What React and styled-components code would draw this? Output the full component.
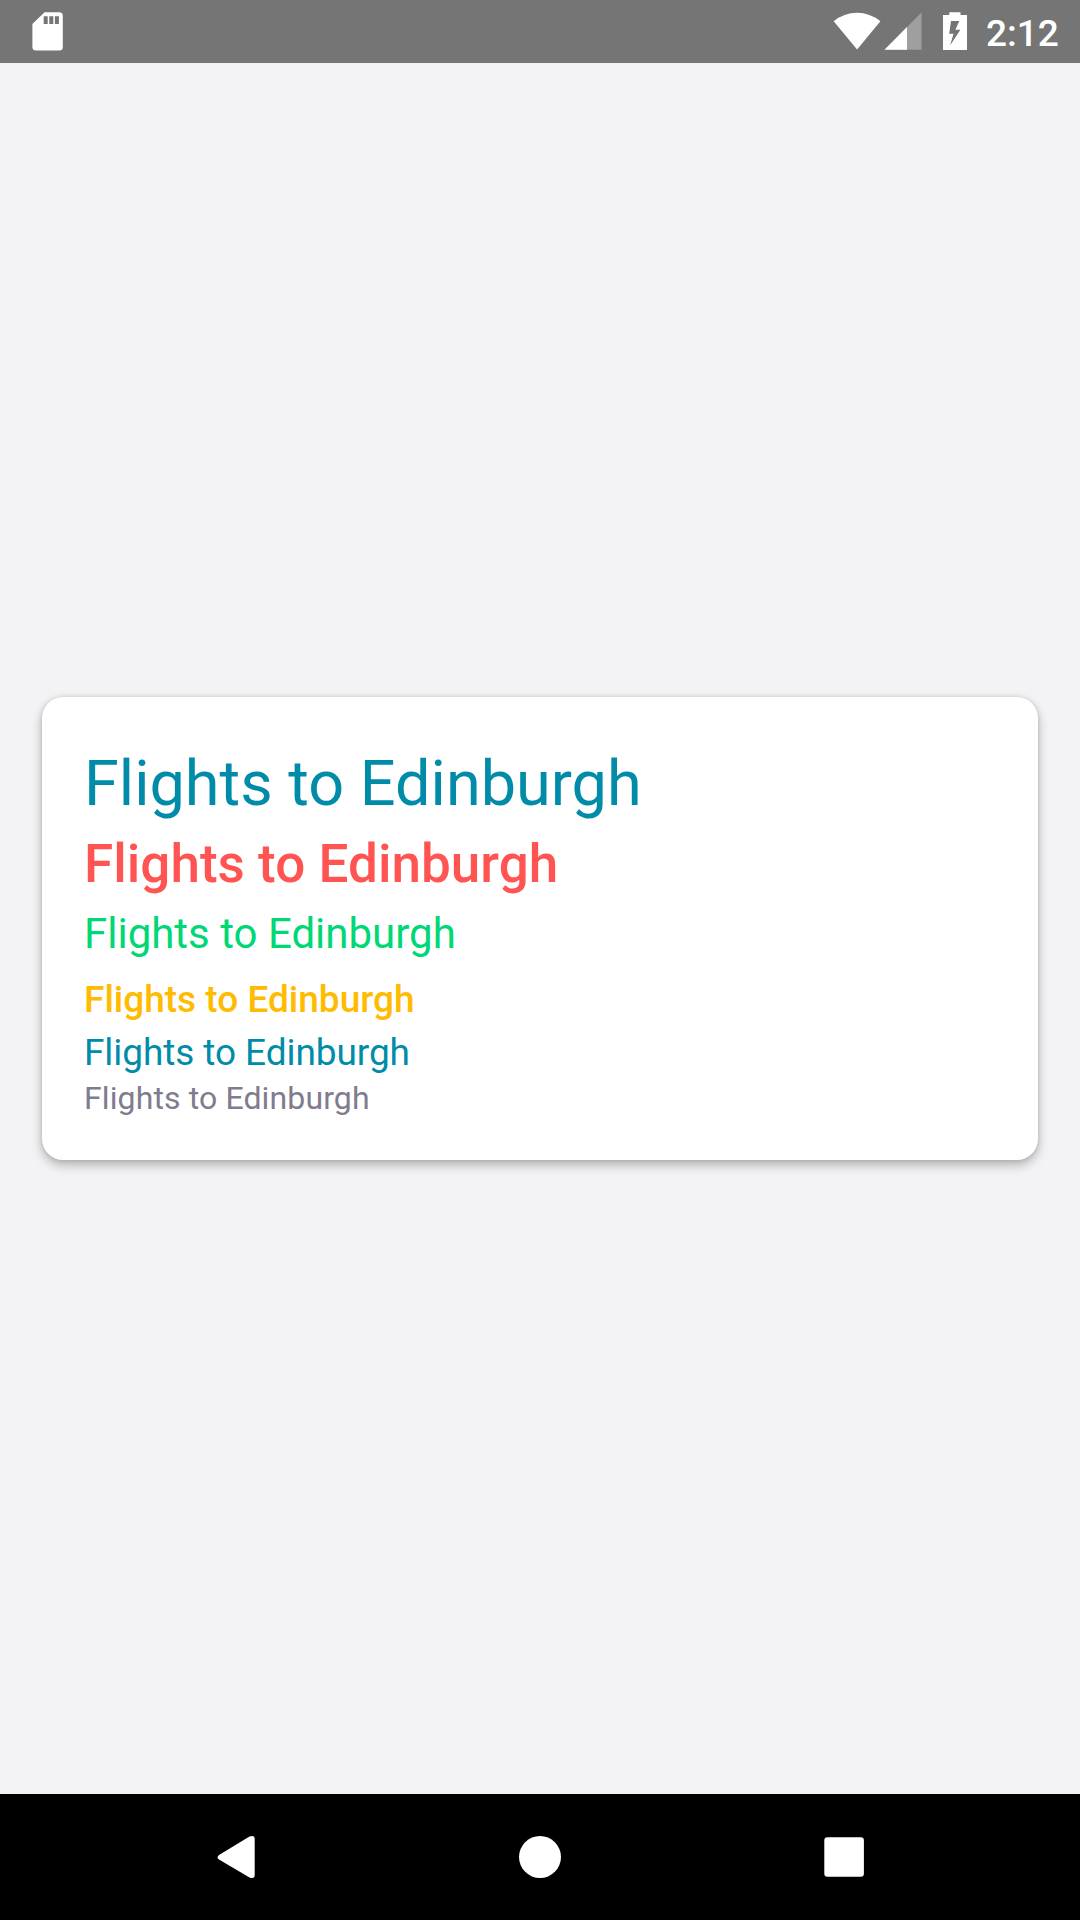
import React from "react";
import styled, { createGlobalStyle } from "styled-components";

const GlobalStyle = createGlobalStyle`
  html, body { margin: 0; padding: 0; }
  body { font-family: Roboto, "Noto Sans", sans-serif; }
`;

const Screen = styled.div`
  display: flex;
  flex-direction: column;
  width: 1080px;
  height: 1920px;
  overflow: hidden;
  background: #f3f3f5;
`;

const StatusBar = styled.header`
  display: flex;
  flex: none;
  justify-content: space-between;
  height: 63px;
  padding: 0 20px 0 32px;
  box-sizing: border-box;
  background: #757575;
`;

const StatusGroup = styled.div`
  display: flex;
`;

const StatusIcon = styled.svg`
  display: block;
  flex: none;
  height: 63px;
  width: ${(p) => p.$width}px;
  margin-right: ${(p) => p.$gap || 0}px;
`;

const Clock = styled.time`
  width: 74px;
  color: #fff;
  font-size: 37px;
  font-weight: 500;
  line-height: 67px;
  white-space: nowrap;
`;

const Content = styled.main`
  display: flex;
  flex: 1;
  flex-direction: column;
  justify-content: center;
  padding: 0 42px;
`;

const Card = styled.section`
  display: flex;
  flex-direction: column;
  height: 463px;
  padding: 42px 42px 39px;
  box-sizing: border-box;
  border-radius: 21px;
  background: #fff;
  box-shadow: 0 5px 11px rgba(0, 0, 0, 0.27), 0 0 4px rgba(0, 0, 0, 0.12);
`;

const Line = styled.div`
  flex: none;
  color: ${(p) => p.$color};
  font-size: ${(p) => p.$size}px;
  font-weight: ${(p) => p.$weight || 400};
  line-height: ${(p) => p.$leading}px;
  margin-bottom: ${(p) => p.$gap || 0}px;
  letter-spacing: ${(p) => p.$tracking || 0}px;
  white-space: nowrap;
`;

const NavBar = styled.nav`
  display: flex;
  flex: none;
  align-items: center;
  justify-content: center;
  gap: 178px;
  height: 126px;
  background: #000;
`;

const NavButton = styled.button`
  display: block;
  width: 126px;
  height: 126px;
  padding: 0;
  border: 0;
  background: none;

  svg { display: block; }
`;

const lines = [
  { $size: 63, $leading: 89, $color: "#008ca8" },
  { $size: 53, $leading: 72, $color: "#ff5452", $weight: 500, $tracking: 0.04 },
  { $size: 42, $leading: 67, $color: "#00d775" },
  { $size: 37, $leading: 65, $color: "#ffbb00", $weight: 500 },
  { $size: 37, $leading: 41, $color: "#008ca8", $gap: 3, $tracking: -0.08 },
  { $size: 32, $leading: 45, $color: "#817b8f", $tracking: 0.12 },
];

export default function App() {
  return (
    <Screen>
      <GlobalStyle />
      <StatusBar>
        <StatusGroup>
          <StatusIcon $width={32} viewBox="0 0 32 63">
            <path
              fill="#fff"
              fillRule="evenodd"
              d="M12.5 12.3H27.2a3.6 3.6 0 0 1 3.6 3.6V47a3.6 3.6 0 0 1-3.6 3.6H4a3.6 3.6 0 0 1-3.6-3.6V24ZM11.7 16.3v7.8h4v-7.8ZM17.3 16.3v7.8h4v-7.8ZM22.9 16.3v7.8h4v-7.8Z"
            />
          </StatusIcon>
        </StatusGroup>
        <StatusGroup>
          <StatusIcon $width={48} $gap={3} viewBox="833 0 48 63">
            <path fill="#fff" d="M833.7 21.3Q844 12.8 857 12.8T880.4 21.3L857.1 49.4Z" />
          </StatusIcon>
          <StatusIcon $width={38} $gap={21} viewBox="884 0 38 63">
            <path fill="#9f9f9f" d="M921.5 12.6V49.7H884.5Z" />
            <path fill="#fff" d="M907 27.1V49.7H884.5Z" />
          </StatusIcon>
          <StatusIcon $width={24} $gap={19} viewBox="943 0 24 63">
            <path
              fill="#fff"
              fillRule="evenodd"
              d="M949.3 12.2h11.2v2.8H967V50H943V15h6.3ZM951 21 949.2 33.7H953.5L950.2 45.3 960.4 29.8H955.3L959.3 21Z"
            />
          </StatusIcon>
          <Clock>2:12</Clock>
        </StatusGroup>
      </StatusBar>
      <Content>
        <Card>
          {lines.map((style, i) => (
            <Line key={i} {...style}>Flights to Edinburgh</Line>
          ))}
        </Card>
      </Content>
      <NavBar>
        <NavButton aria-label="Back">
          <svg width="126" height="126" viewBox="173 1794 126 126">
            <path
              fill="#fff"
              d="M219 1855 249.5 1836.6Q254.7 1834.5 254.7 1839V1875Q254.7 1879.5 249.5 1877.4L219 1859.6Q216 1857.3 219 1855Z"
            />
          </svg>
        </NavButton>
        <NavButton aria-label="Home">
          <svg width="126" height="126" viewBox="477 1794 126 126">
            <circle cx="540" cy="1857" r="21" fill="#fff" />
          </svg>
        </NavButton>
        <NavButton aria-label="Overview">
          <svg width="126" height="126" viewBox="781 1794 126 126">
            <rect x="824.3" y="1837.2" width="39.6" height="39.6" rx="3" fill="#fff" />
          </svg>
        </NavButton>
      </NavBar>
    </Screen>
  );
}
